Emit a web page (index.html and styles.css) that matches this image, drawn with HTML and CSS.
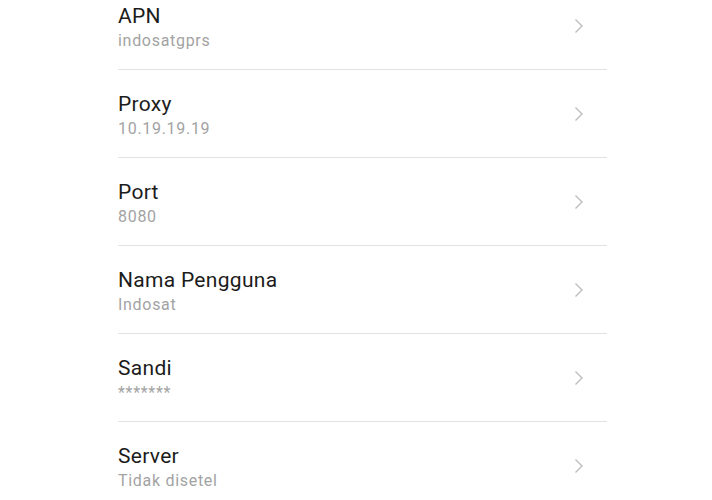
FILE: index.html
```html
<!DOCTYPE html>
<html lang="en">
<head>
    <meta charset="UTF-8">
    <meta name="viewport" content="width=device-width, initial-scale=1.0">
    <title>APN</title>
    <link rel="stylesheet" href="styles.css">
</head>
<body>
    <div class="settings">
        <div class="item">
            <div class="text">
                <div class="title">APN</div>
                <div class="value">indosatgprs</div>
            </div>
            <svg class="chevron" viewBox="0 0 10 16"><path d="M1.5 1.5 L8 8 L1.5 14.5"/></svg>
        </div>
        <div class="item">
            <div class="text">
                <div class="title">Proxy</div>
                <div class="value">10.19.19.19</div>
            </div>
            <svg class="chevron" viewBox="0 0 10 16"><path d="M1.5 1.5 L8 8 L1.5 14.5"/></svg>
        </div>
        <div class="item">
            <div class="text">
                <div class="title">Port</div>
                <div class="value">8080</div>
            </div>
            <svg class="chevron" viewBox="0 0 10 16"><path d="M1.5 1.5 L8 8 L1.5 14.5"/></svg>
        </div>
        <div class="item">
            <div class="text">
                <div class="title">Nama Pengguna</div>
                <div class="value">Indosat</div>
            </div>
            <svg class="chevron" viewBox="0 0 10 16"><path d="M1.5 1.5 L8 8 L1.5 14.5"/></svg>
        </div>
        <div class="item">
            <div class="text">
                <div class="title">Sandi</div>
                <div class="value">*******</div>
            </div>
            <svg class="chevron" viewBox="0 0 10 16"><path d="M1.5 1.5 L8 8 L1.5 14.5"/></svg>
        </div>
        <div class="item">
            <div class="text">
                <div class="title">Server</div>
                <div class="value">Tidak disetel</div>
            </div>
            <svg class="chevron" viewBox="0 0 10 16"><path d="M1.5 1.5 L8 8 L1.5 14.5"/></svg>
        </div>
    </div>
</body>
</html>
```

FILE: styles.css
```css
body {
    font-family: Roboto, 'Noto Sans', sans-serif;
    margin: 0;
    padding: 0;
    background: #ffffff;
    overflow: hidden;
}
.settings {
    margin: -18px 0 0 118px;
    width: 489px;
}
.item {
    display: flex;
    align-items: center;
    justify-content: space-between;
    height: 87px;
    border-bottom: 1px solid #e2e2e2;
    box-sizing: content-box;
}
.text {
    align-self: flex-start;
    padding-top: 20px;
}
.title {
    font-size: 21px;
    line-height: 28px;
    color: #1c1c1c;
    letter-spacing: 0.3px;
}
.value {
    font-size: 16px;
    line-height: 22px;
    color: #a3a3a3;
    letter-spacing: 0.7px;
}
.chevron {
    width: 10px;
    height: 16px;
    margin-right: 23px;
    fill: none;
    stroke: #bdbdbd;
    stroke-width: 1.4;
}
```
